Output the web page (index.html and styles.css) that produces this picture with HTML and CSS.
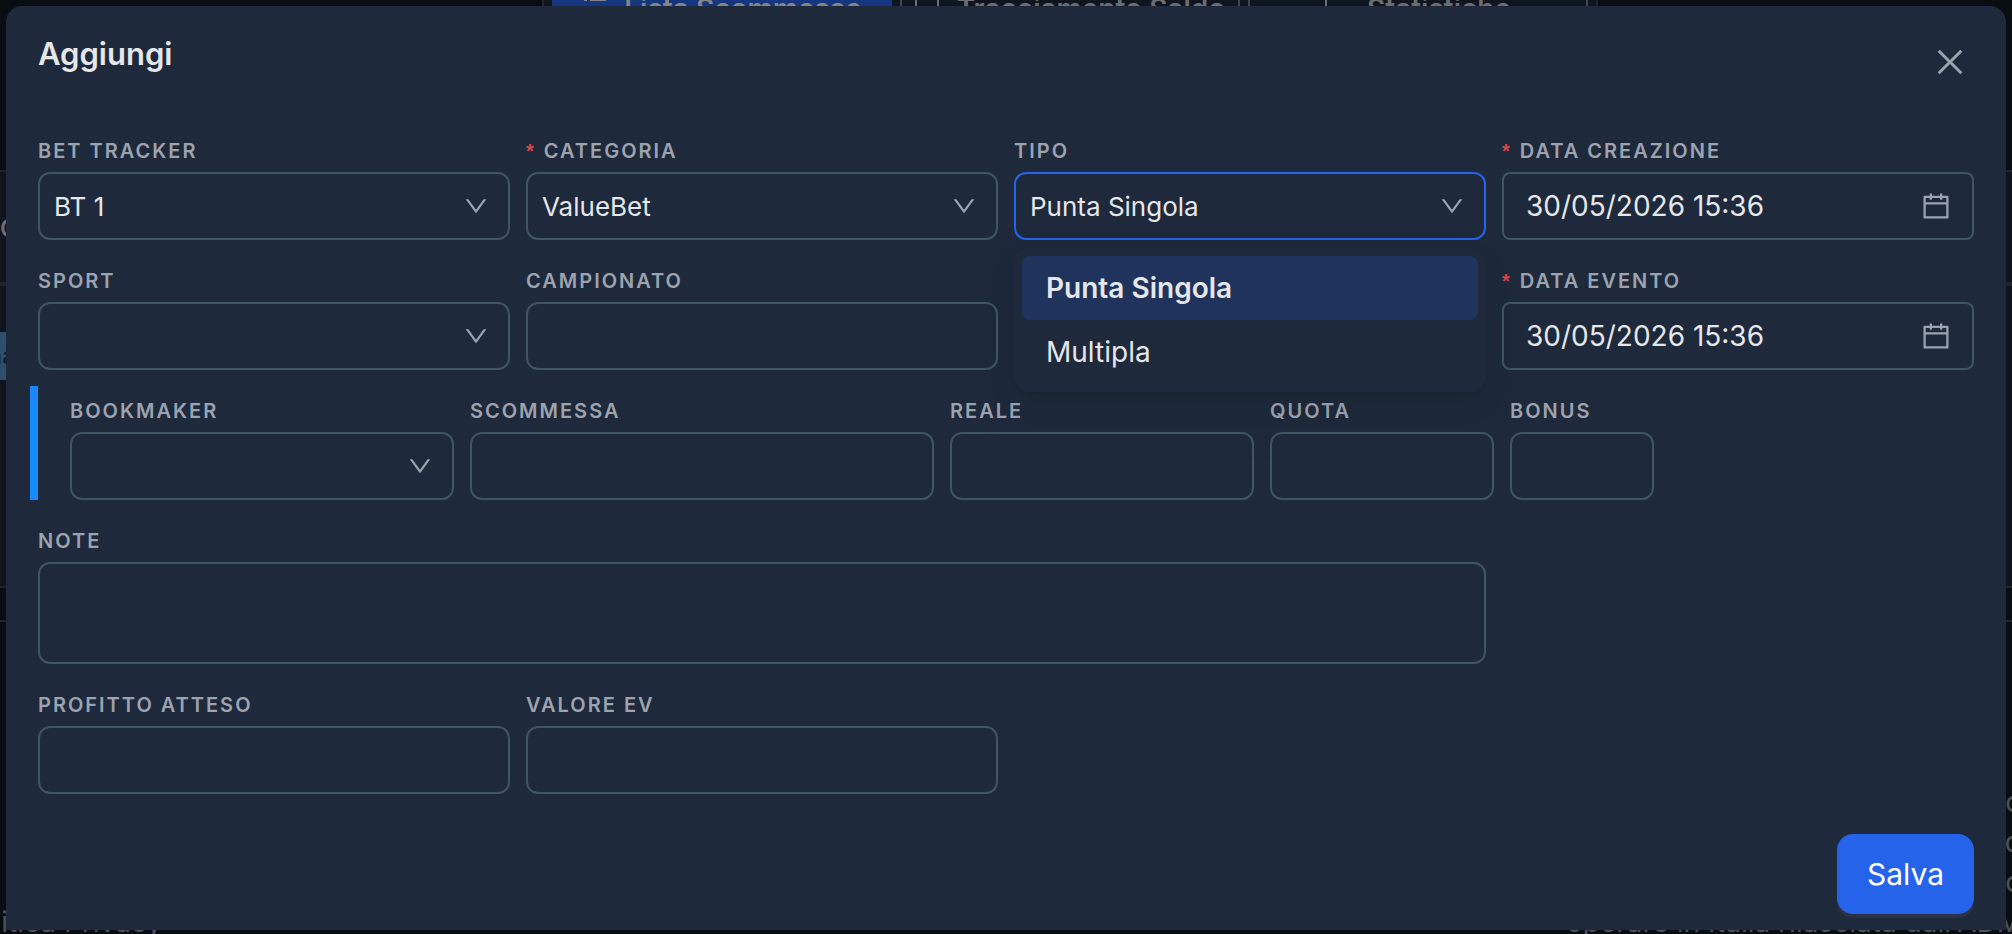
FILE: index.html
```html
<!DOCTYPE html>
<html lang="it">
  <head>
    <meta charset="UTF-8" />
    <meta name="viewport" content="width=device-width, initial-scale=1.0" />
    <title>Bet Tracker | Aggiungi</title>
    <link rel="stylesheet" href="styles.css">
  </head>
  <body>
    <!-- Icons -->
    <svg class="icon-defs" aria-hidden="true">
      <symbol id="icon-down" viewBox="64 64 896 896">
        <path d="M884 256h-75c-5.100 0-9.900 2.500-12.900 6.600L512 654.200 227.900 262.600c-3-4.100-7.800-6.600-12.900-6.600h-75c-6.500 0-10.300 7.400-6.500 12.700l352.600 486.100c12.800 17.600 39 17.600 51.700 0l352.600-486.100c3.900-5.300.1-12.700-6.400-12.700z" />
      </symbol>
      <symbol id="icon-calendar" viewBox="64 64 896 896">
        <path d="M880 184H712v-64c0-4.400-3.600-8-8-8h-56c-4.400 0-8 3.600-8 8v64H384v-64c0-4.400-3.600-8-8-8h-56c-4.400 0-8 3.600-8 8v64H144c-17.700 0-32 14.300-32 32v664c0 17.700 14.300 32 32 32h736c17.700 0 32-14.300 32-32V216c0-17.700-14.300-32-32-32zm-40 656H184V460h656v380zM184 392V256h128v48c0 4.400 3.600 8 8 8h56c4.400 0 8-3.600 8-8v-48h256v48c0 4.400 3.600 8 8 8h56c4.400 0 8-3.600 8-8v-48h128v136H184z" />
      </symbol>
      <symbol id="icon-close" viewBox="64 64 896 896">
        <path d="M800 166l58 58-288 288 288 288-58 58-288-288-288 288-58-58 288-288-288-288 58-58 288 288z" />
      </symbol>
    </svg>

    <!-- Page behind the modal -->
    <div class="page" aria-hidden="true">
      <div class="tabs">
        <div class="tab active">
          <svg class="tab-icon" viewBox="0 0 24 24"><path d="M2 2h3v2H2zM8 2h16v2H8zM2 9h2v4H1zM7 10h17v3H7zM2 19h3v2H2zM8 19h16v2H8z" /></svg>
          Lista Scommesse
        </div>
        <div class="tab">
          <svg class="tab-icon" viewBox="0 0 24 24"><path d="M0 0h2v24H0zM22 0h2v24h-2z" /></svg>
          Tracciamento Saldo
        </div>
        <div class="tab">
          <svg class="tab-icon" viewBox="0 0 24 24"><path d="M0 0h2v24H0zM9 11h2v11H9zM18 9h2v13h-2z" /></svg>
          Statistiche
        </div>
      </div>
      <div class="panel">
        <div class="panel-head">Codice</div>
        <div class="panel-body">
          <span class="chip">na</span>
        </div>
      </div>
      <div class="panel-foot"></div>
      <div class="footer">
        <span class="footer-link">Politica Privacy</span>
        <div class="footer-text">
          <span>o</span>
          <span>q</span>
          <span>o</span>
          <span>operare in Italia rilasciata dall'ADM</span>
        </div>
      </div>
    </div>

    <!-- Modal -->
    <div class="modal" role="dialog" aria-labelledby="modal-title">
      <div class="modal-header">
        <h2 id="modal-title">Aggiungi</h2>
        <button type="button" class="close-button" aria-label="Chiudi">
          <svg><use href="#icon-close" /></svg>
        </button>
      </div>

      <form class="form">
        <div class="row">
          <div class="field">
            <label for="bet-tracker">Bet Tracker</label>
            <div class="control">
              <select id="bet-tracker">
                <option>BT 1</option>
              </select>
              <svg class="arrow"><use href="#icon-down" /></svg>
            </div>
          </div>
          <div class="field required">
            <label for="categoria">Categoria</label>
            <div class="control">
              <select id="categoria">
                <option>ValueBet</option>
              </select>
              <svg class="arrow"><use href="#icon-down" /></svg>
            </div>
          </div>
          <div class="field">
            <label for="tipo">Tipo</label>
            <div class="control open">
              <select id="tipo">
                <option>Punta Singola</option>
                <option>Multipla</option>
              </select>
              <svg class="arrow"><use href="#icon-down" /></svg>
              <ul class="dropdown" role="listbox" aria-label="Tipo">
                <li role="option" aria-selected="true">Punta Singola</li>
                <li role="option" aria-selected="false">Multipla</li>
              </ul>
            </div>
          </div>
          <div class="field required">
            <label for="data-creazione">Data Creazione</label>
            <div class="control">
              <input type="text" class="date" id="data-creazione" value="30/05/2026 15:36" />
              <svg class="calendar"><use href="#icon-calendar" /></svg>
            </div>
          </div>
        </div>

        <div class="row">
          <div class="field">
            <label for="sport">Sport</label>
            <div class="control">
              <select id="sport">
                <option></option>
              </select>
              <svg class="arrow"><use href="#icon-down" /></svg>
            </div>
          </div>
          <div class="field">
            <label for="campionato">Campionato</label>
            <input type="text" id="campionato" />
          </div>
          <div class="field required last">
            <label for="data-evento">Data Evento</label>
            <div class="control">
              <input type="text" class="date" id="data-evento" value="30/05/2026 15:36" />
              <svg class="calendar"><use href="#icon-calendar" /></svg>
            </div>
          </div>
        </div>

        <!-- Single bet -->
        <div class="bet-row">
          <div class="field span-5">
            <label for="bookmaker">Bookmaker</label>
            <div class="control">
              <select id="bookmaker">
                <option></option>
              </select>
              <svg class="arrow"><use href="#icon-down" /></svg>
            </div>
          </div>
          <div class="field span-6">
            <label for="scommessa">Scommessa</label>
            <input type="text" id="scommessa" />
          </div>
          <div class="field span-4">
            <label for="reale">Reale</label>
            <input type="text" id="reale" />
          </div>
          <div class="field span-3">
            <label for="quota">Quota</label>
            <input type="text" id="quota" />
          </div>
          <div class="field span-2">
            <label for="bonus">Bonus</label>
            <input type="text" id="bonus" />
          </div>
        </div>

        <div class="row">
          <div class="field note">
            <label for="note">Note</label>
            <textarea id="note"></textarea>
          </div>
        </div>

        <div class="row">
          <div class="field">
            <label for="profitto">Profitto Atteso</label>
            <input type="text" id="profitto" />
          </div>
          <div class="field">
            <label for="valore-ev">Valore EV</label>
            <input type="text" id="valore-ev" />
          </div>
        </div>

        <div class="modal-footer">
          <button type="submit" class="save-button">Salva</button>
        </div>
      </form>
    </div>
  </body>
</html>
```
FILE: styles.css
```css
/* Global Styles */
* {
  box-sizing: border-box;
}

body {
  margin: 0;
  padding: 6px;
  font-family: Inter, "Liberation Sans", sans-serif;
  font-size: 28px;
  background-color: #070d11;
  color: #e5e7eb;
  overflow: hidden;
}

.icon-defs {
  display: none;
}

svg {
  fill: currentColor;
}

/* Page behind the modal */
.page {
  position: absolute;
  inset: 0;
  overflow: hidden;
  color: #6b6d70;
}

.tabs {
  display: flex;
  gap: 8px;
  width: 1056px;
  height: 48px;
  margin: -15px 0 0 calc(50% - 464px);
  padding: 0 8px;
  background-color: #0f151e;
  border: solid #1d252b;
  border-width: 0 2px;
}

.tab {
  display: flex;
  flex: 1;
  align-items: center;
  justify-content: center;
  gap: 18px;
  border: solid #43474b;
  border-width: 0 2px;
  font-weight: 600;
  white-space: nowrap;
}

.tab.active {
  background-color: #16357f;
  border-color: #16357f;
  color: #858585;
}

.tab-icon {
  flex: none;
  width: 24px;
  height: 24px;
}

.panel {
  margin-top: 137px;
  height: 418px;
  background-color: #0f131c;
  border: solid #1d252b;
  border-width: 2px 0;
}

.panel-head {
  height: 114px;
  border-bottom: 4px solid #1d252b;
  font-size: 24px;
  font-weight: 600;
  line-height: 114px;
}

.chip {
  display: block;
  width: 200px;
  margin: 46px 0 0 -12px;
  background-color: #2d4f6d;
  color: #0b1622;
  font-size: 24px;
  line-height: 48px;
}

.panel-foot {
  height: 34px;
  border-bottom: 2px solid #1d252b;
}

.footer {
  display: flex;
  align-items: flex-end;
  justify-content: space-between;
  margin: 160px -10px 0 -40px;
  line-height: 40px;
  color: #4f5255;
}

.footer-text {
  display: flex;
  flex-direction: column;
  align-items: flex-end;
}

/* Modal */
.modal {
  position: relative;
  padding: 24px 32px 16px;
  background-color: #1e293b;
  border-radius: 16px 16px 0 0;
}

.modal-header {
  display: flex;
  justify-content: space-between;
  height: 96px;
}

.modal-header h2 {
  margin: 0;
  font-size: 31px;
  font-weight: 600;
  line-height: 48px;
}

.close-button {
  width: 48px;
  height: 48px;
  margin: 8px 0;
  padding: 8px;
  background: none;
  border: none;
  color: #9ca3af;
  cursor: pointer;
}

.close-button svg {
  display: block;
  width: 32px;
  height: 32px;
}

/* Form */
.form {
  display: flex;
  flex-direction: column;
  gap: 16px;
}

.row {
  display: grid;
  grid-template-columns: repeat(4, 1fr);
  gap: 16px;
}

.field.last {
  grid-column: 4;
}

.field.note {
  grid-column: span 3;
}

.bet-row {
  display: grid;
  grid-template-columns: repeat(24, 1fr);
  gap: 16px;
  margin-left: -8px;
  padding-left: 32px;
  border-left: 8px solid #1888ff;
}

.span-2 {
  grid-column: span 2;
}

.span-3 {
  grid-column: span 3;
}

.span-4 {
  grid-column: span 4;
}

.span-5 {
  grid-column: span 5;
}

.span-6 {
  grid-column: span 6;
}

label {
  display: block;
  height: 46px;
  font-size: 20px;
  font-weight: 600;
  line-height: 50px;
  letter-spacing: 2px;
  text-transform: uppercase;
  color: #9ca3af;
}

.required label::before {
  content: "*";
  margin-right: 8px;
  font-family: "Liberation Sans", sans-serif;
  font-weight: 700;
  color: #dc4446;
}

.control {
  position: relative;
}

select,
input,
textarea {
  display: block;
  width: 100%;
  height: 68px;
  margin: 0;
  padding: 0 14px;
  background-color: #1e293b;
  border: 2px solid #405463;
  border-radius: 12px;
  outline: none;
  color: #e5e7eb;
  font-family: inherit;
  font-size: 26px;
  appearance: none;
}

textarea {
  height: 102px;
  resize: none;
}

.date {
  padding: 0 64px 0 22px;
  border-radius: 8px;
  font-size: 28px;
}

.open select {
  border-color: #2563eb;
}

.arrow,
.calendar {
  position: absolute;
  top: 22px;
  right: 22px;
  width: 24px;
  height: 24px;
  color: #9ca3af;
  pointer-events: none;
}

.calendar {
  top: 20px;
  right: 24px;
  width: 28px;
  height: 28px;
}

/* Dropdown */
.dropdown {
  position: absolute;
  z-index: 10;
  top: 76px;
  left: 0;
  right: 0;
  margin: 0;
  padding: 8px;
  list-style: none;
  background-color: #1e293b;
  border-radius: 16px;
  box-shadow: 0 12px 32px rgba(0, 0, 0, 0.06), 0 6px 12px -8px rgba(0, 0, 0, 0.12), 0 18px 56px 16px rgba(0, 0, 0, 0.03);
}

.dropdown li {
  padding: 0 24px;
  border-radius: 8px;
  line-height: 64px;
}

.dropdown li[aria-selected="true"] {
  background-color: #20335c;
  font-weight: 600;
}

/* Footer */
.modal-footer {
  display: flex;
  justify-content: flex-end;
  padding-top: 24px;
}

.save-button {
  height: 80px;
  padding: 0 30px;
  background-color: #2563eb;
  border: none;
  border-radius: 16px;
  box-shadow: 0 4px 0 rgba(56, 60, 76, 0.5);
  color: #ffffff;
  font-family: inherit;
  font-size: 30px;
  cursor: pointer;
}
```
